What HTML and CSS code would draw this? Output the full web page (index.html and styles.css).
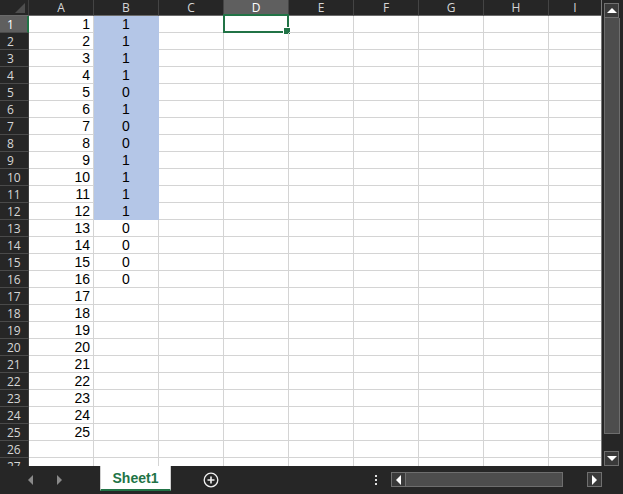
FILE: index.html
```html
<!DOCTYPE html>
<html lang="en">
<head>
    <meta charset="UTF-8">
    <meta name="viewport" content="width=device-width, initial-scale=1.0">
    <link rel="stylesheet" href="styles.css">
    <title>Book1</title>
</head>
<body>
    <div class="workbook">
        <div class="main">
            <div class="sheet" id="sheet">
                <div class="corner"><span class="corner-tri"></span></div>
                <div class="col-head">A</div>
                <div class="col-head">B</div>
                <div class="col-head">C</div>
                <div class="col-head active">D</div>
                <div class="col-head">E</div>
                <div class="col-head">F</div>
                <div class="col-head">G</div>
                <div class="col-head">H</div>
                <div class="col-head">I</div>
            </div>
            <div class="vscroll">
                <div class="sb-btn"><span class="tri-up"></span></div>
                <div class="vthumb"></div>
                <div class="sb-btn"><span class="tri-down"></span></div>
            </div>
        </div>
        <div class="tabbar">
            <div class="nav">
                <span class="tri-left dim"></span>
                <span class="tri-right dim"></span>
            </div>
            <div class="tab">Sheet1</div>
            <div class="add">
                <svg width="16" height="16" viewBox="0 0 16 16">
                    <circle cx="8" cy="8" r="6.8" fill="none" stroke="#f0f0f0" stroke-width="1.3"/>
                    <path d="M8 4.5v7M4.5 8h7" stroke="#f0f0f0" stroke-width="1.6"/>
                </svg>
            </div>
            <div class="dots"><i></i><i></i><i></i></div>
            <div class="hscroll">
                <div class="sb-btn"><span class="tri-left"></span></div>
                <div class="hthumb"></div>
                <div class="hgap"></div>
                <div class="sb-btn"><span class="tri-right"></span></div>
            </div>
        </div>
    </div>
    <script type="text/javascript">
        const sheet = document.querySelector('#sheet');
        const colB = [1, 1, 1, 1, 0, 1, 0, 0, 1, 1, 1, 1, 0, 0, 0, 0];

        for (let r = 1; r <= 27; r++) {
            const head = document.createElement('div');
            head.className = r == 1 ? 'row-head active' : 'row-head';
            head.textContent = r;
            sheet.appendChild(head);

            for (let c = 0; c < 9; c++) {
                const cell = document.createElement('div');
                cell.className = 'cell';
                if (c == 0 && r <= 25) {
                    cell.classList.add('num');
                    cell.textContent = r;
                }
                if (c == 1) {
                    cell.classList.add('mid');
                    if (r <= colB.length) cell.textContent = colB[r - 1];
                    if (r <= 12) cell.classList.add('selected');
                }
                if (c == 3 && r == 1) {
                    const box = document.createElement('span');
                    box.className = 'active-box';
                    cell.appendChild(box);
                }
                sheet.appendChild(cell);
            }
        }
    </script>
</body>
</html>
```

FILE: styles.css
```css
* {
  box-sizing: border-box;
}

body {
  margin: 0;
  background-color: #262626;
  font-family: "Open Sans", "Liberation Sans", sans-serif;
  overflow: hidden;
}

.workbook {
  width: 623px;
  height: 494px;
  display: flex;
  flex-direction: column;
}

.main {
  height: 466px;
  display: flex;
}

.sheet {
  width: 602px;
  height: 466px;
  overflow: hidden;
  display: grid;
  grid-template-columns: 29px repeat(8, 65px) 53px;
  grid-template-rows: 16px repeat(27, 17px);
  background-color: #ffffff;
  border-right: 1px solid #7a7a7a;
}

.corner {
  background-color: #262626;
  border-right: 1px solid #3e3e3e;
  border-bottom: 1px solid #6a6a6a;
  position: relative;
}

.corner-tri {
  position: absolute;
  right: 3px;
  bottom: 2px;
  width: 0;
  height: 0;
  border-left: 10px solid transparent;
  border-bottom: 10px solid #4e4e4e;
}

.col-head {
  background-color: #262626;
  color: #d6d6d6;
  font-size: 12px;
  line-height: 16px;
  text-align: center;
  border-right: 1px solid #444444;
  border-bottom: 1px solid #6a6a6a;
}

.col-head.active {
  background-color: #5f5f5f;
  color: #ffffff;
}

.row-head {
  background-color: #262626;
  color: #d6d6d6;
  font-size: 12px;
  line-height: 15px;
  padding: 1px 0 0 7px;
  border-right: 1px solid #3e3e3e;
  border-bottom: 1px solid #4a4a4a;
}

.row-head.active {
  background-color: #5f5f5f;
  color: #ffffff;
  border-right: 2px solid #217346;
}

.cell {
  position: relative;
  color: #000000;
  font-family: "Liberation Sans", Arial, sans-serif;
  font-size: 14px;
  line-height: 15px;
  padding: 1px 3px 0 3px;
  border-right: 1px solid #d4d4d4;
  border-bottom: 1px solid #d4d4d4;
  white-space: nowrap;
}

.cell.num {
  text-align: right;
}

.cell.mid {
  text-align: center;
}

.cell.selected {
  background-color: #b4c6e7;
  border-color: #b4c6e7;
}

.active-box {
  position: absolute;
  top: -2px;
  left: -1px;
  right: -1px;
  bottom: -1px;
  border: 2px solid #217346;
}

.active-box::after {
  content: "";
  position: absolute;
  right: -4px;
  bottom: -4px;
  width: 6px;
  height: 6px;
  background-color: #217346;
  border: 1px solid #ffffff;
}

/* scrollbars */
.vscroll {
  width: 21px;
  display: flex;
  flex-direction: column;
  padding: 3px 3px 0 2px;
}

.sb-btn {
  width: 15px;
  height: 15px;
  background-color: #3a3a3a;
  border: 1px solid #707070;
  display: flex;
  align-items: center;
  justify-content: center;
  flex-shrink: 0;
}

.vthumb {
  height: 416px;
  background-color: #4d4d4d;
  border: 1px solid #6e6e6e;
  border-top: none;
}

.vscroll .sb-btn:last-child {
  margin-top: auto;
}

.tri-up,
.tri-down,
.tri-left,
.tri-right {
  width: 0;
  height: 0;
}

.tri-up {
  border-left: 5px solid transparent;
  border-right: 5px solid transparent;
  border-bottom: 5px solid #ffffff;
}

.tri-down {
  border-left: 5px solid transparent;
  border-right: 5px solid transparent;
  border-top: 5px solid #ffffff;
}

.tri-left {
  border-top: 5px solid transparent;
  border-bottom: 5px solid transparent;
  border-right: 5px solid #ffffff;
}

.tri-right {
  border-top: 5px solid transparent;
  border-bottom: 5px solid transparent;
  border-left: 5px solid #ffffff;
}

.tri-left.dim {
  border-right-color: #8a8a8a;
}

.tri-right.dim {
  border-left-color: #8a8a8a;
}

/* tab bar */
.tabbar {
  height: 28px;
  display: flex;
  align-items: flex-start;
}

.nav {
  width: 100px;
  height: 28px;
  display: flex;
  align-items: center;
  gap: 24px;
  padding-left: 28px;
}

.tab {
  width: 71px;
  height: 25px;
  background-color: #ffffff;
  border-left: 1px solid #d0d0d0;
  border-right: 1px solid #d0d0d0;
  border-bottom: 2px solid #217346;
  color: #217346;
  font-family: "Liberation Sans", Arial, sans-serif;
  font-weight: bold;
  font-size: 14px;
  line-height: 25px;
  text-align: center;
}

.add {
  width: 80px;
  height: 28px;
  display: flex;
  align-items: center;
  padding-left: 32px;
}

.dots {
  width: 140px;
  height: 28px;
  display: flex;
  flex-direction: column;
  align-items: flex-end;
  justify-content: center;
  gap: 2px;
  padding-right: 14px;
}

.dots i {
  width: 2px;
  height: 2px;
  background-color: #e0e0e0;
}

.hscroll {
  width: 211px;
  display: flex;
  margin-top: 6px;
}

.hthumb {
  width: 157px;
  height: 15px;
  background-color: #4d4d4d;
  border: 1px solid #6e6e6e;
  border-left: none;
}

.hgap {
  flex: 1;
}
```
